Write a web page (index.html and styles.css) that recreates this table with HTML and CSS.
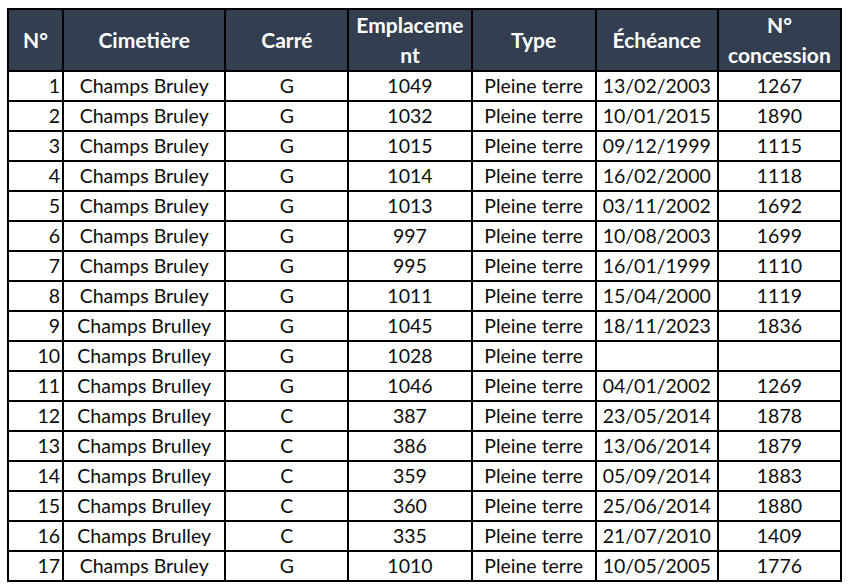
FILE: index.html
```html
<!DOCTYPE html>
<html lang="fr">
<head>
<meta charset="utf-8">
<title>Concessions</title>
<link rel="stylesheet" href="styles.css">
</head>
<body>
<table class="grid">
  <colgroup>
    <col class="c-num"><col class="c-cim"><col class="c-car"><col class="c-emp"><col class="c-type"><col class="c-ech"><col class="c-con">
  </colgroup>
  <thead>
    <tr>
      <th>N°</th><th>Cimetière</th><th>Carré</th><th>Emplaceme<br>nt</th><th>Type</th><th>Échéance</th><th>N°<br>concession</th>
    </tr>
  </thead>
  <tbody>
    <tr><td class="num">1</td><td>Champs Bruley</td><td>G</td><td>1049</td><td>Pleine terre</td><td>13/02/2003</td><td>1267</td></tr>
    <tr><td class="num">2</td><td>Champs Bruley</td><td>G</td><td>1032</td><td>Pleine terre</td><td>10/01/2015</td><td>1890</td></tr>
    <tr><td class="num">3</td><td>Champs Bruley</td><td>G</td><td>1015</td><td>Pleine terre</td><td>09/12/1999</td><td>1115</td></tr>
    <tr><td class="num">4</td><td>Champs Bruley</td><td>G</td><td>1014</td><td>Pleine terre</td><td>16/02/2000</td><td>1118</td></tr>
    <tr><td class="num">5</td><td>Champs Bruley</td><td>G</td><td>1013</td><td>Pleine terre</td><td>03/11/2002</td><td>1692</td></tr>
    <tr><td class="num">6</td><td>Champs Bruley</td><td>G</td><td>997</td><td>Pleine terre</td><td>10/08/2003</td><td>1699</td></tr>
    <tr><td class="num">7</td><td>Champs Bruley</td><td>G</td><td>995</td><td>Pleine terre</td><td>16/01/1999</td><td>1110</td></tr>
    <tr><td class="num">8</td><td>Champs Bruley</td><td>G</td><td>1011</td><td>Pleine terre</td><td>15/04/2000</td><td>1119</td></tr>
    <tr><td class="num">9</td><td>Champs Brulley</td><td>G</td><td>1045</td><td>Pleine terre</td><td>18/11/2023</td><td>1836</td></tr>
    <tr><td class="num">10</td><td>Champs Brulley</td><td>G</td><td>1028</td><td>Pleine terre</td><td></td><td></td></tr>
    <tr><td class="num">11</td><td>Champs Brulley</td><td>G</td><td>1046</td><td>Pleine terre</td><td>04/01/2002</td><td>1269</td></tr>
    <tr><td class="num">12</td><td>Champs Brulley</td><td>C</td><td>387</td><td>Pleine terre</td><td>23/05/2014</td><td>1878</td></tr>
    <tr><td class="num">13</td><td>Champs Brulley</td><td>C</td><td>386</td><td>Pleine terre</td><td>13/06/2014</td><td>1879</td></tr>
    <tr><td class="num">14</td><td>Champs Brulley</td><td>C</td><td>359</td><td>Pleine terre</td><td>05/09/2014</td><td>1883</td></tr>
    <tr><td class="num">15</td><td>Champs Brulley</td><td>C</td><td>360</td><td>Pleine terre</td><td>25/06/2014</td><td>1880</td></tr>
    <tr><td class="num">16</td><td>Champs Brulley</td><td>C</td><td>335</td><td>Pleine terre</td><td>21/07/2010</td><td>1409</td></tr>
    <tr><td class="num">17</td><td>Champs Bruley</td><td>G</td><td>1010</td><td>Pleine terre</td><td>10/05/2005</td><td>1776</td></tr>
  </tbody>
</table>
</body>
</html>
```
FILE: styles.css
```css
html, body {
  margin: 0;
  padding: 0;
  background: #ffffff;
}
body {
  padding: 8px 0 0 7px;
  font-family: "Lato", "Open Sans", "Liberation Sans", sans-serif;
  color: #0d0d0d;
}
.grid {
  border-collapse: collapse;
  table-layout: fixed;
  width: 835px;
  border: 2px solid #000;
}
.c-num { width: 55px; }
.c-cim { width: 162px; }
.c-car { width: 123px; }
.c-emp { width: 123px; }
.c-type { width: 124px; }
.c-ech { width: 122px; }
.c-con { width: 123px; }
.grid th {
  background: #333f50;
  color: #ffffff;
  font-weight: bold;
  font-size: 21px;
  line-height: 30px;
  height: 60px;
  padding: 0;
  border: 2px solid #000;
  text-align: center;
  vertical-align: middle;
  white-space: nowrap;
}
.grid td {
  height: 28px;
  padding: 0 2px;
  border: 2px solid #000;
  font-size: 19.5px;
  line-height: 28px;
  text-align: center;
  vertical-align: bottom;
  white-space: nowrap;
  overflow: hidden;
}
.grid td.num {
  text-align: right;
}
```
